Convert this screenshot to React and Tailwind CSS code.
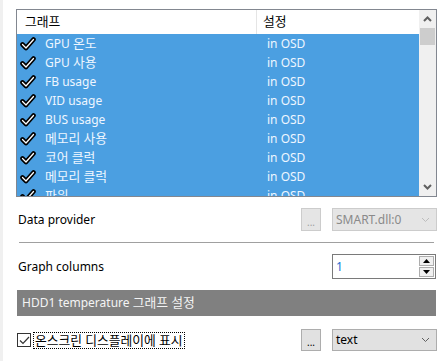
import React from "react";

const rows = [
    "GPU 온도",
    "GPU 사용",
    "FB usage",
    "VID usage",
    "BUS usage",
    "메모리 사용",
    "코어 클럭",
    "메모리 클럭",
    "파워",
];

// Hangul runs a touch bigger, like Malgun Gothic next to Segoe UI
function T({ children }) {
    const parts = String(children).split(/([가-힣]+)/);
    return (
        <>
            {parts.map((p, i) =>
                /[가-힣]/.test(p) ? (
                    <span key={i} className="text-[12.8px]">{p}</span>
                ) : (
                    <span key={i}>{p}</span>
                )
            )}
        </>
    );
}

function Check() {
    return (
        <svg width="16" height="14" viewBox="0 0 16 14">
            <path d="M2.5 7.5 L6 11 L13.5 2.5" fill="none" stroke="#000" strokeWidth="4.6" strokeLinecap="round" strokeLinejoin="round" />
            <path d="M2.5 7.5 L6 11 L13.5 2.5" fill="none" stroke="#fff" strokeWidth="1.3" strokeLinecap="round" strokeLinejoin="round" />
        </svg>
    );
}

function Chevron({ up, color = "#606060", w = 9, h = 6, sw = 2 }) {
    return (
        <svg width={w} height={h} viewBox="0 0 9 6">
            <path d={up ? "M1 5 L4.5 1.5 L8 5" : "M1 1 L4.5 4.5 L8 1"} fill="none" stroke={color} strokeWidth={sw} />
        </svg>
    );
}

export default function App() {
    return (
        <div
            className="w-[447px] h-[361px] bg-white flex overflow-hidden text-[12px] text-black"
            style={{ fontFamily: '"Segoe UI", "Noto Sans", "Noto Sans CJK KR", sans-serif' }}
        >
            <div className="w-[3px] bg-[#f0f0f0]" />
            <div className="flex-1 flex flex-col pl-[13px] pr-[10px] pt-[9px]">
                {/* list */}
                <div className="h-[188px] border border-[#828790] flex">
                    <div className="flex-1 flex flex-col overflow-hidden">
                        <div className="h-[24px] shrink-0 flex bg-white">
                            <div className="w-[240px] border-r border-[#e5e5e5] pl-[8px] flex items-center"><T>그래프</T></div>
                            <div className="flex-1 pl-[6px] flex items-center"><T>설정</T></div>
                        </div>
                        <div className="flex-1 bg-[#4b9fe1] overflow-hidden">
                            {rows.map((r) => (
                                <div key={r} className="h-[19px] flex items-center text-[#eef6ff] overflow-hidden">
                                    <div className="w-[28px] pl-[3px] flex items-center">
                                        <Check />
                                    </div>
                                    <div className="w-[213px] leading-[19px]"><T>{r}</T></div>
                                    <div className="pl-[9px] leading-[19px]">in OSD</div>
                                </div>
                            ))}
                        </div>
                    </div>
                    <div className="w-[17px] bg-[#f0f0f0] flex flex-col items-center">
                        <div className="h-[18px] flex items-center justify-center">
                            <Chevron up />
                        </div>
                        <div className="w-[15px] h-[17px] bg-[#cdcdcd]" />
                        <div className="flex-1" />
                        <div className="h-[18px] flex items-center justify-center">
                            <Chevron />
                        </div>
                    </div>
                </div>

                {/* data provider */}
                <div className="mt-[11px] h-[23px] flex items-center">
                    <div className="flex-1 pl-[2px]">Data provider</div>
                    <div className="w-[20px] h-[23px] bg-[#e5e5e5] border border-[#cccccc] flex items-center justify-center text-[#a0a0a0] text-[10px] leading-none pt-[4px]">...</div>
                    <div className="ml-[11px] w-[105px] h-[23px] bg-[#e5e5e5] border border-[#cccccc] flex items-center pl-[3px] pr-[6px] text-[#8a8a8a]">
                        <span className="flex-1">SMART.dll:0</span>
                        <Chevron color="#bdbdbd" w={9} h={6} sw={1} />
                    </div>
                </div>

                <div className="mt-[11px] mx-[3px] h-[1px] bg-[#a0a0a0]" />

                {/* graph columns */}
                <div className="mt-[11px] h-[25px] flex items-center">
                    <div className="flex-1 pl-[2px]">Graph columns</div>
                    <div className="w-[104px] h-[25px] border border-[#7a7a7a] flex bg-white mr-[1px]">
                        <div className="flex-1 pl-[3px] flex items-center text-[#1a6fd0]">1</div>
                        <div className="w-[17px] flex flex-col p-[1px] gap-[1px]">
                            <div className="flex-1 bg-[#f0f0f0] border border-[#adadad] flex items-center justify-center">
                                <svg width="7" height="4" viewBox="0 0 7 4"><path d="M0 4 L3.5 0 L7 4 Z" fill="#000" /></svg>
                            </div>
                            <div className="flex-1 bg-[#f0f0f0] border border-[#adadad] flex items-center justify-center">
                                <svg width="7" height="4" viewBox="0 0 7 4"><path d="M0 0 L3.5 4 L7 0 Z" fill="#000" /></svg>
                            </div>
                        </div>
                    </div>
                </div>

                {/* section bar */}
                <div className="mt-[11px] mx-[1px] h-[26px] bg-[#808080] flex items-center pl-[5px] text-[#f4f4f4]">
                    <span><T>HDD1 temperature 그래프 설정</T></span>
                </div>

                {/* osd row */}
                <div className="mt-[13px] h-[22px] flex items-center">
                    <div className="flex-1 flex items-center pl-[1px]">
                        <div className="w-[14px] h-[14px] border border-[#333] bg-white flex items-center justify-center">
                            <svg width="11" height="9" viewBox="0 0 11 9"><path d="M1 4.5 L4 7.5 L10 1" fill="none" stroke="#333" strokeWidth="1.2" /></svg>
                        </div>
                        <div className="ml-[2px] px-[1px] border border-dotted border-black leading-[15px]"><T>온스크린 디스플레이에 표시</T></div>
                    </div>
                    <div className="w-[20px] h-[22px] bg-[#e1e1e1] border border-[#adadad] flex items-center justify-center text-[10px] leading-none pt-[4px]">...</div>
                    <div className="ml-[11px] w-[105px] h-[22px] bg-[#e1e1e1] border border-[#adadad] flex items-center pl-[3px] pr-[6px]">
                        <span className="flex-1">text</span>
                        <Chevron color="#606060" sw={1} />
                    </div>
                </div>
            </div>
        </div>
    );
}
